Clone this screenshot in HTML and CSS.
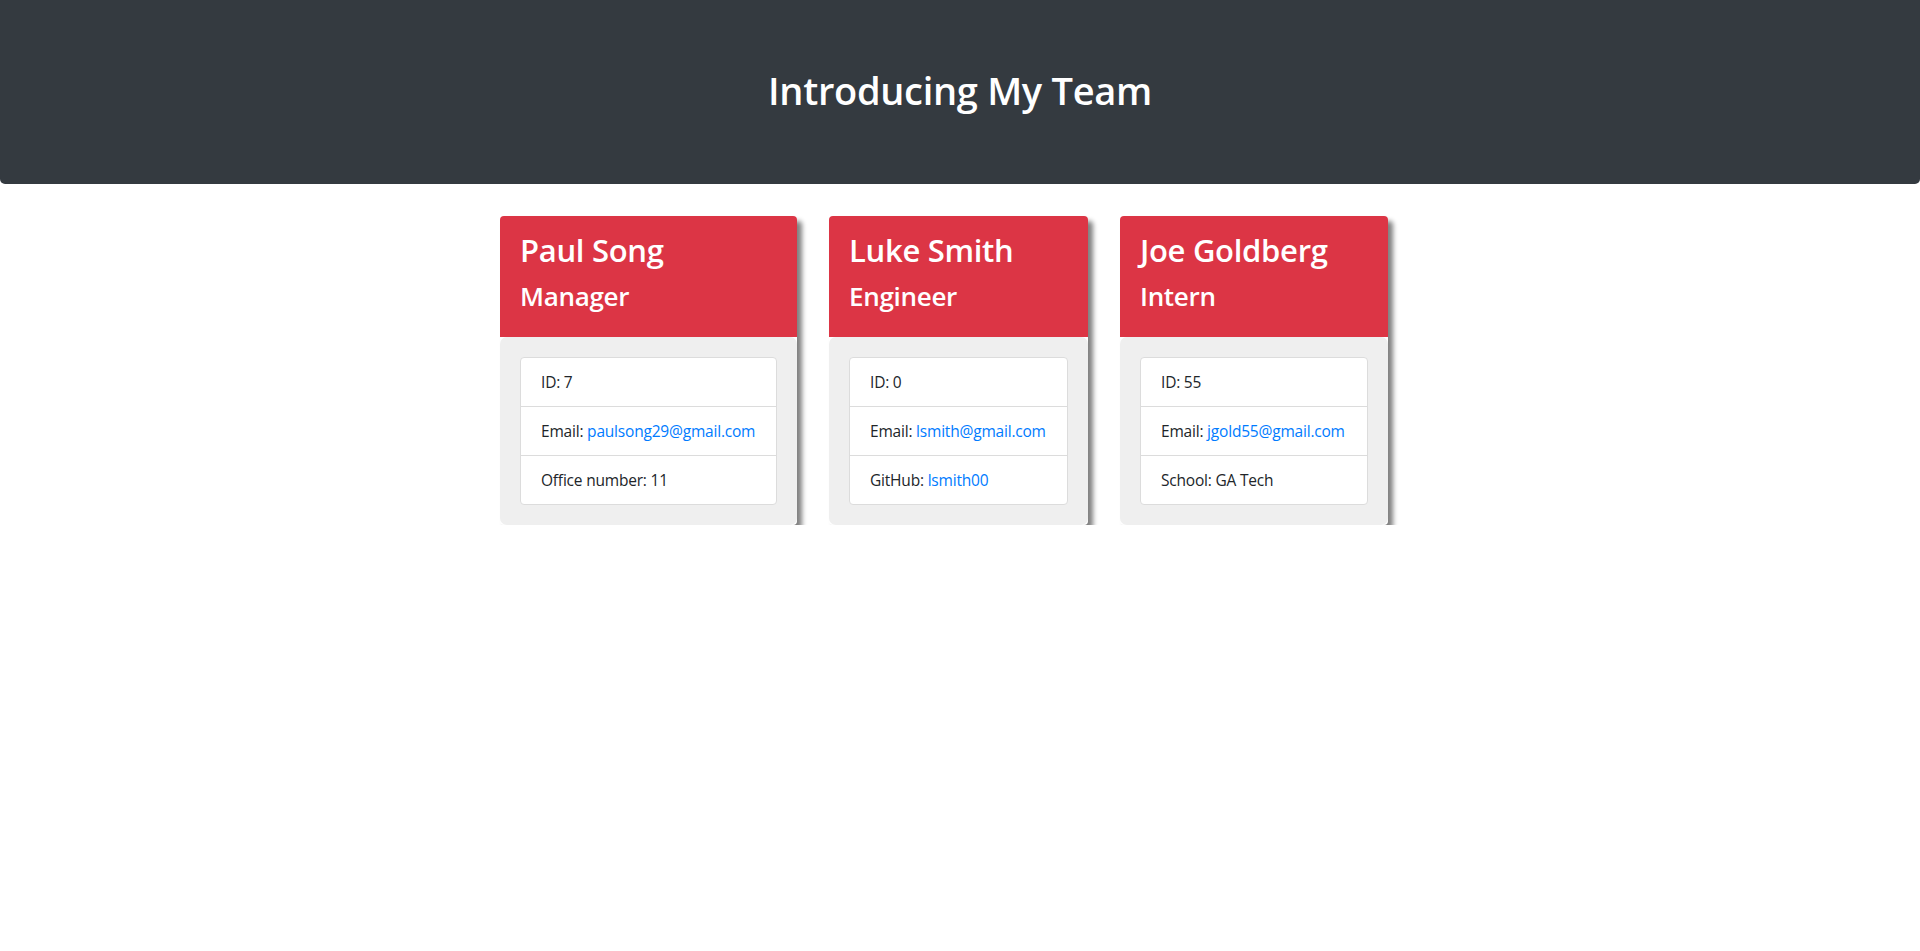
FILE: index.html
```html
<!DOCTYPE html>
<html lang="en">
<head>
<meta charset="utf-8">
<title>My Team</title>
<link rel="stylesheet" href="styles.css">
</head>
<body>
<header class="hero">
  <h1 class="hero-title">Introducing My Team</h1>
</header>
<main class="team">
  <section class="card card-manager">
    <div class="card-head">
      <h2 class="card-name">Paul Song</h2>
      <h3 class="card-role">Manager</h3>
    </div>
    <div class="card-body">
      <ul class="info-list">
        <li class="info-item">ID: 7</li>
        <li class="info-item">Email: <a href="#">paulsong29@gmail.com</a></li>
        <li class="info-item">Office number: 11</li>
      </ul>
    </div>
  </section>
  <section class="card card-engineer">
    <div class="card-head">
      <h2 class="card-name">Luke Smith</h2>
      <h3 class="card-role">Engineer</h3>
    </div>
    <div class="card-body">
      <ul class="info-list">
        <li class="info-item">ID: 0</li>
        <li class="info-item">Email: <a href="#">lsmith@gmail.com</a></li>
        <li class="info-item">GitHub: <a href="#">lsmith00</a></li>
      </ul>
    </div>
  </section>
  <section class="card card-intern">
    <div class="card-head">
      <h2 class="card-name">Joe Goldberg</h2>
      <h3 class="card-role">Intern</h3>
    </div>
    <div class="card-body">
      <ul class="info-list">
        <li class="info-item">ID: 55</li>
        <li class="info-item">Email: <a href="#">jgold55@gmail.com</a></li>
        <li class="info-item">School: GA Tech</li>
      </ul>
    </div>
  </section>
</main>
</body>
</html>
```
FILE: styles.css
```css
* { box-sizing: border-box; }
html, body { margin: 0; padding: 0; background: #fff; }
body {
  font-family: "Open Sans", "Noto Sans", "Liberation Sans", sans-serif;
  font-size: 16px;
  line-height: 1.5;
  color: #212529;
}
.hero {
  height: 184px;
  background: #343a40;
  border-radius: 0 0 5px 5px;
  display: flex;
  align-items: center;
  justify-content: center;
}
.hero-title {
  margin: 0;
  color: #fff;
  font-size: 38px;
  font-weight: 600;
  line-height: 1.2;
  letter-spacing: -0.3px;
  padding-bottom: 3px;
}
.team {
  display: flex;
  justify-content: center;
  align-items: flex-start;
  padding-top: 32px;
}
.card {
  margin-right: 32px;
  background: #fff;
  border-radius: 4px;
  box-shadow: 5px 5px 5px #808080;
  flex: none;
}
.card-manager { width: 297px; }
.card-engineer { width: 259px; }
.card-intern { width: 268px; }
.card-head {
  background: #dc3545;
  color: #fff;
  border-radius: 4px 4px 0 0;
  padding: 13px 20px 0;
  height: 121px;
}
.card-name {
  margin: 0;
  font-size: 31px;
  font-weight: 600;
  line-height: 42px;
  letter-spacing: -0.3px;
}
.card-role {
  margin: 8px 0 0;
  font-size: 26px;
  font-weight: 600;
  line-height: 34px;
  letter-spacing: -0.3px;
}
.card-body {
  background: #efefef;
  border-radius: 7px;
  padding: 20px;
}
.info-list {
  list-style: none;
  margin: 0;
  padding: 0;
  background: #fff;
  border: 1px solid #dcdcdc;
  border-radius: 4px;
}
.info-item {
  padding: 12px 20px;
  font-size: 15.5px;
  line-height: 24px;
  white-space: nowrap;
  letter-spacing: -0.2px;
}
.info-item + .info-item { border-top: 1px solid #dcdcdc; }
.info-item a { color: #007bff; text-decoration: none; }
```
